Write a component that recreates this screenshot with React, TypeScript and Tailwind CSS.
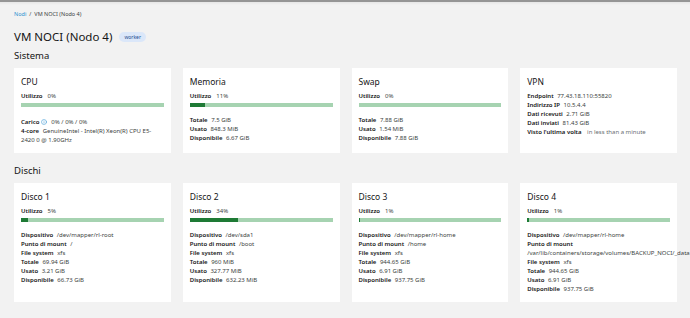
import { Info } from "lucide-react";

type Row = { label: string; value: string; muted?: boolean };

const sistema = [
  { title: "CPU", usage: 0 },
  { title: "Memoria", usage: 11 },
  { title: "Swap", usage: 0 },
];

const dischi = [
  {
    title: "Disco 1",
    usage: 5,
    rows: [
      { label: "Dispositivo", value: "/dev/mapper/rl-root" },
      { label: "Punto di mount", value: "/" },
      { label: "File system", value: "xfs" },
      { label: "Totale", value: "69.94 GiB" },
      { label: "Usato", value: "3.21 GiB" },
      { label: "Disponibile", value: "66.73 GiB" },
    ],
  },
  {
    title: "Disco 2",
    usage: 34,
    rows: [
      { label: "Dispositivo", value: "/dev/sda1" },
      { label: "Punto di mount", value: "/boot" },
      { label: "File system", value: "xfs" },
      { label: "Totale", value: "960 MiB" },
      { label: "Usato", value: "327.77 MiB" },
      { label: "Disponibile", value: "632.23 MiB" },
    ],
  },
  {
    title: "Disco 3",
    usage: 1,
    rows: [
      { label: "Dispositivo", value: "/dev/mapper/rl-home" },
      { label: "Punto di mount", value: "/home" },
      { label: "File system", value: "xfs" },
      { label: "Totale", value: "944.65 GiB" },
      { label: "Usato", value: "6.91 GiB" },
      { label: "Disponibile", value: "937.75 GiB" },
    ],
  },
  {
    title: "Disco 4",
    usage: 1,
    rows: [
      { label: "Dispositivo", value: "/dev/mapper/rl-home" },
      { label: "Punto di mount", value: "/var/lib/containers/storage/volumes/BACKUP_NOCI/_data" },
      { label: "File system", value: "xfs" },
      { label: "Totale", value: "944.65 GiB" },
      { label: "Usato", value: "6.91 GiB" },
      { label: "Disponibile", value: "937.75 GiB" },
    ],
  },
];

const memRows: Row[] = [
  { label: "Totale", value: "7.5 GiB" },
  { label: "Usato", value: "848.3 MiB" },
  { label: "Disponibile", value: "6.67 GiB" },
];

const swapRows: Row[] = [
  { label: "Totale", value: "7.88 GiB" },
  { label: "Usato", value: "1.54 MiB" },
  { label: "Disponibile", value: "7.88 GiB" },
];

const vpnRows: Row[] = [
  { label: "Endpoint", value: "77.43.18.110:55820" },
  { label: "Indirizzo IP", value: "10.5.4.4" },
  { label: "Dati ricevuti", value: "2.71 GiB" },
  { label: "Dati inviati", value: "81.43 GiB" },
  { label: "Visto l'ultima volta", value: "in less than a minute", muted: true },
];

function Usage({ pct }: { pct: number }) {
  return (
    <div>
      <div className="leading-[9px]">
        <span className="font-semibold text-[#151515]">Utilizzo</span>
        <span className="ml-[5px] text-[#3c3f42]">{pct}%</span>
      </div>
      <div className="mt-[2px] h-[4px] bg-[#a6d3b1] flex">
        <div className="h-full bg-[#1e7a35]" style={{ width: `${pct}%` }} />
      </div>
    </div>
  );
}

function Rows({ rows }: { rows: Row[] }) {
  return (
    <div>
      {rows.map(r => (
        <div key={r.label} className="leading-[9px]">
          <span className={`font-semibold text-[#151515] ${r.muted ? "mr-[4px]" : "mr-[2px]"}`}>{r.label}</span>{" "}
          <span className={r.muted ? "text-[#6a6e73]" : "text-[#3c3f42]"}>{r.value}</span>
        </div>
      ))}
    </div>
  );
}

function Card({ title, children }: { title: string; children: React.ReactNode }) {
  return (
    <div className="bg-white px-[7px] pt-[8px] pb-[8px] text-[6px]">
      <div className="text-[8.5px] leading-[12px] text-[#151515] mb-[4px]">{title}</div>
      {children}
    </div>
  );
}

export default function App() {
  return (
    <div
      className="w-[690px] h-[318px] overflow-hidden bg-[#f2f2f2] text-[#151515]"
      style={{ fontFamily: "'Noto Sans', 'Open Sans', sans-serif" }}
    >
      <div className="h-[2px] bg-[#959595]" />
      <div className="h-[3px] bg-gradient-to-b from-[#e6e6e6] to-[#f2f2f2]" />
      <div className="px-[14px] pr-[13px]">
        {/* breadcrumb */}
        <div className="mt-[5px] text-[5.5px] leading-[9px] text-[#3c3f42]">
          <span className="text-[#2b8fd0]">Nodi</span>
          <span className="mx-[3px]">/</span>
          <span>VM NOCI (Nodo 4)</span>
        </div>

        <div className="mt-[9px] flex items-center gap-[7px] h-[18px]">
          <h1 className="text-[11.5px] leading-[18px] text-[#151515]">VM NOCI (Nodo 4)</h1>
          <span className="h-[10px] px-[5px] rounded-full bg-[#dbe7f9] text-[#1b4a8f] text-[5px] leading-[10px]">worker</span>
        </div>

        <div className="mt-[4px] text-[9.5px] leading-[12px]">Sistema</div>
        <div className="mt-[6px] grid grid-cols-4 gap-[12px]">
          <Card title="CPU">
            <Usage pct={sistema[0].usage} />
            <div className="mt-[11px]">
              <div className="leading-[9px] flex items-center">
                <span className="font-semibold">Carico</span>
                <Info size={6} strokeWidth={2} className="shrink-0 text-[#2b8fd0] ml-[2px] mb-[2px]" />
                <span className="ml-[4px] text-[#3c3f42]">0% / 0% / 0%</span>
              </div>
              <div className="leading-[9px]">
                <span className="font-semibold mr-[2px]">4-core</span>{" "}
                <span className="text-[#3c3f42]">GenuineIntel - Intel(R) Xeon(R) CPU E5-2420 0 @ 1.90GHz</span>
              </div>
            </div>
          </Card>
          <Card title="Memoria">
            <Usage pct={sistema[1].usage} />
            <div className="mt-[9px]">
              <Rows rows={memRows} />
            </div>
          </Card>
          <Card title="Swap">
            <Usage pct={sistema[2].usage} />
            <div className="mt-[9px]">
              <Rows rows={swapRows} />
            </div>
          </Card>
          <Card title="VPN">
            <Rows rows={vpnRows} />
          </Card>
        </div>

        <div className="mt-[12px] text-[9.5px] leading-[12px]">Dischi</div>
        <div className="mt-[6px] grid grid-cols-4 gap-[12px]">
          {dischi.map(d => (
            <Card key={d.title} title={d.title}>
              <Usage pct={d.usage} />
              <div className="mt-[9px]">
                <Rows rows={d.rows} />
              </div>
            </Card>
          ))}
        </div>
      </div>
    </div>
  );
}
